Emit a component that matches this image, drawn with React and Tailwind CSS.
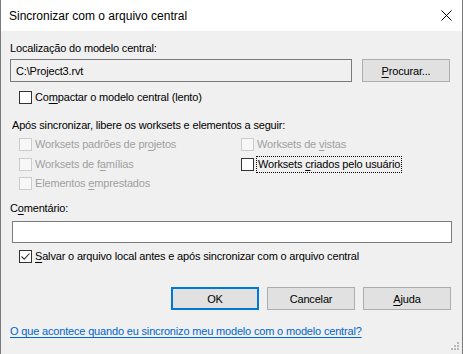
import React from 'react';

const font = { fontFamily: '"Segoe UI", "Liberation Sans", Arial, sans-serif' };

function Mn({ children }) {
  return <span className="underline underline-offset-[2px]">{children}</span>;
}

function CheckBox({ checked, disabled }) {
  return (
    <span
      className={`flex h-[13px] w-[13px] shrink-0 items-center justify-center border ${
        disabled ? 'border-[#cccccc] bg-[#f7f7f7]' : 'border-[#333333] bg-white'
      }`}
    >
      {checked && (
        <svg width="11" height="11" viewBox="0 0 11 11">
          <path d="M1.5 5.5 L4.2 8.2 L9.5 2.5" fill="none" stroke="#333" strokeWidth="1.1" />
        </svg>
      )}
    </span>
  );
}

function Option({ children, checked, disabled, focused }) {
  return (
    <div className="flex h-[17px] items-center">
      <CheckBox checked={checked} disabled={disabled} />
      <span
        className={`ml-[3px] leading-[15px] ${disabled ? 'text-[#a0a0a0]' : 'text-black'} ${
          focused ? 'outline outline-1 outline-dotted outline-black px-[1px]' : ''
        }`}
      >
        {children}
      </span>
    </div>
  );
}

function Button({ children, primary }) {
  return (
    <button
      className={`flex h-[23px] w-[88px] items-center justify-center bg-[#e1e1e1] text-black ${
        primary ? 'border-2 border-[#0078d7]' : 'border border-[#adadad]'
      }`}
    >
      {children}
    </button>
  );
}

export default function App() {
  return (
    <div
      style={font}
      className="relative flex h-[354px] w-[463px] flex-col overflow-hidden border-x border-[#7a7a7a] bg-[#f0f0f0] text-[11px] leading-[16px] tracking-[-0.17px] text-black"
    >
      {/* title bar */}
      <div className="flex h-[31px] shrink-0 items-center justify-between bg-white pl-[8px] pr-[10px]">
        <span className="text-[12px] tracking-normal">Sincronizar com o arquivo central</span>
        <svg width="11" height="11" viewBox="0 0 11 11">
          <path d="M0.5 0.5 L10.5 10.5 M10.5 0.5 L0.5 10.5" stroke="#000" strokeWidth="1" />
        </svg>
      </div>

      <div className="flex flex-col pl-[9px] pr-[11px]">
        <div className="mt-[9px]">Localização do modelo central:</div>

        <div className="mt-[3px] flex items-center gap-[10px]">
          <div className="flex h-[23px] w-[342px] items-center border border-[#7a7a7a] bg-[#f0f0f0] pl-[5px]">
            C:\Project3.rvt
          </div>
          <Button>
            <Mn>P</Mn>rocurar...
          </Button>
        </div>

        <div className="mt-[7px] pl-[9px]">
          <Option>
            Co<Mn>m</Mn>pactar o modelo central (lento)
          </Option>
        </div>

        <div className="mt-[11px] pl-[2px]">Após sincronizar, libere os worksets e elementos a seguir:</div>

        <div className="mt-[3px] grid grid-cols-[222px_1fr] gap-y-[2.5px] pl-[9px]">
          <Option disabled>
            Worksets padrões de pr<Mn>o</Mn>jetos
          </Option>
          <Option disabled>
            Worksets de <Mn>v</Mn>istas
          </Option>
          <Option disabled>
            Worksets de f<Mn>a</Mn>mílias
          </Option>
          <Option focused>
            Worksets <Mn>c</Mn>riados pelo usuário
          </Option>
          <Option disabled>
            Elementos <Mn>e</Mn>mprestados
          </Option>
        </div>

        <div className="mt-[8px]">
          C<Mn>o</Mn>mentário:
        </div>
        <div className="ml-[2px] mt-[5px] h-[22px] w-[440px] border border-[#7a7a7a] bg-white" />

        <div className="mt-[5px] pl-[9px]">
          <Option checked>
            <Mn>S</Mn>alvar o arquivo local antes e após sincronizar com o arquivo central
          </Option>
        </div>

        <div className="mt-[22px] flex justify-end gap-[8px]">
          <Button primary>OK</Button>
          <Button>Cancelar</Button>
          <Button>
            <Mn>A</Mn>juda
          </Button>
        </div>

        <div className="mt-[13px]">
          <span className="text-[#0066cc] underline underline-offset-[2px]">
            O que acontece quando eu sincronizo meu modelo com o modelo central?
          </span>
        </div>
      </div>

      {/* size grip */}
      <svg className="absolute bottom-[3px] right-[2px]" width="9" height="9" viewBox="0 0 9 9">
        <rect x="6" y="0" width="2" height="2" fill="#b8b8b8" />
        <rect x="3" y="3" width="2" height="2" fill="#b8b8b8" />
        <rect x="6" y="3" width="2" height="2" fill="#b8b8b8" />
        <rect x="0" y="6" width="2" height="2" fill="#b8b8b8" />
        <rect x="3" y="6" width="2" height="2" fill="#b8b8b8" />
        <rect x="6" y="6" width="2" height="2" fill="#b8b8b8" />
      </svg>
    </div>
  );
}
